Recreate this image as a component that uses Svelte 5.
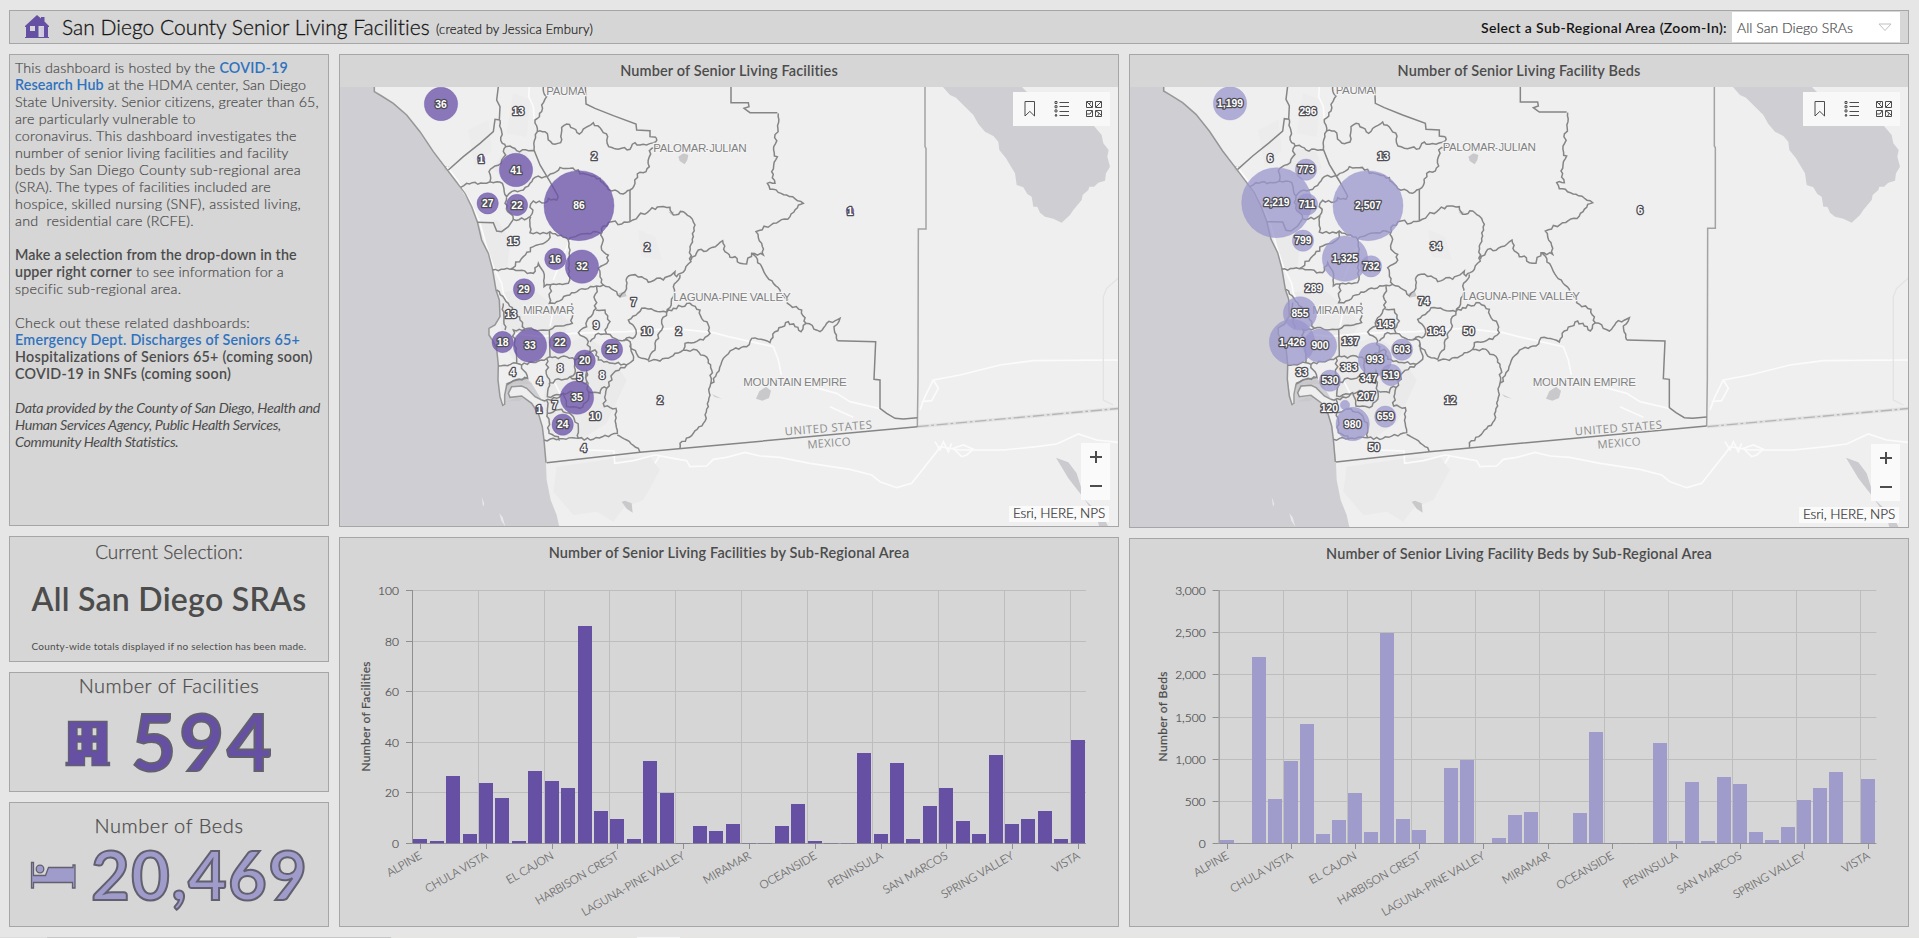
<script>
  // Spreads a line of text over a given width through its letter spacing.
  function track(node, width) {
    const n = [...node.textContent].length;
    const natural = node.getBoundingClientRect().width;
    node.style.letterSpacing = `${(width - natural) / n}px`;
  }

  const facilities = [2,1,27,4,24,18,1,29,25,22,86,13,10,2,33,20,0,7,5,8,0,0,7,16,1,0,0,36,4,32,2,15,22,9,4,35,8,10,13,2,41];
  const beds = [50,12,2219,537,985,1426,120,289,603,145,2507,296,170,13,900,995,0,74,347,383,0,0,370,1330,13,0,0,1199,34,735,33,799,711,145,50,207,525,665,855,12,773];
  const areas = ['ALPINE','CHULA VISTA','EL CAJON','HARBISON CREST','LAGUNA-PINE VALLEY','MIRAMAR','OCEANSIDE','PENINSULA','SAN MARCOS','SPRING VALLEY','VISTA'];

  // Map geometry is in thirds of a pixel.
  const straight = [
    '475,110 470,150 480,170 478,210',
    '1755,110 1755,290 1758,295 1758,537 1735,537 1734,990 1732,1130',
    '620,1238 900,1207 1140,1185 1732,1130',
    '948,262 930,260 930,242 890,240 888,222 820,197 765,175 738,162 736,110',
    '325,360 370,320 420,280 460,245 465,208 480,210',
    '870,420 870,515',
    '1312,188 1230,188 1212,175 1227,170 1225,158 1173,158 1173,110',
    '1492,872 1607,875 1602,988 1620,990 1620,1075 1640,1090 1665,1105 1690,1107 1732,1103',
    '628,840 630,920', '582,300 600,345 630,395 655,440', '412,517 460,518 470,543 485,545 505,530 520,508'
  ];
  const natural = [
    '480,210 485,245 487,280 497,290 490,305 497,315 485,330 483,340 465,348 447,365 450,395',
    '497,290 510,288 530,302 583,302',
    '610,110 620,140 605,165 605,185 585,210 592,245 582,300',
    '655,440 650,450 625,445 615,458 580,453 572,462 577,490 562,505 520,508',
    '592,245 615,245 632,275 645,283 662,278 665,232 680,222 700,235 718,252 738,232 760,218 785,240 803,260 806,290 845,295 870,298 885,278 900,285 948,275',
    '948,262 948,295 928,302 928,350 918,365 892,372 885,400 870,420 850,432 825,420 805,418 780,385 720,372 715,360 690,355 660,352 640,370 615,380 585,382 570,400 550,420 515,425 500,440 487,400 470,395 430,400 380,400 362,412',
    '500,440 495,460 510,490 520,508',
    '870,515 845,522 815,515 790,528 782,555 790,570 785,600 805,615 800,640 775,655 790,705 830,725 840,740 855,725 858,690',
    '870,515 895,498 930,480 960,470 990,472 1000,495 1030,485 1050,500 1065,525 1060,560 1050,590 1053,635 1035,660 1010,680 1005,665 970,690 950,685 925,697 905,680 875,675 858,690',
    '1053,630 1075,600 1100,603 1148,572 1155,605 1170,622 1185,620 1200,640 1220,642 1235,610 1270,615 1265,580 1248,545 1300,520 1350,500 1375,465 1390,460 1340,435 1290,418 1282,400 1305,400 1295,365 1312,320 1303,318 1315,190',
    '572,500 570,548 600,552 630,545 670,562 685,570 690,600 685,700 640,702 612,710 610,665 595,640 580,670 510,658 457,660',
    '510,658 550,620 580,590 625,570 630,545',
    '685,570 715,555 770,545 782,550',
    '632,705 628,760 650,755 695,728 735,718 770,708 790,705',
    '695,760 697,820 655,828 628,840 555,837 540,810 505,760 470,720',
    '770,708 765,750 768,775 745,805 740,830 715,848 745,875 748,910',
    '768,780 795,780 810,815 795,840 800,852 845,872 885,860 888,840 865,810 905,775 980,787 1000,740 1000,710 1015,690 1020,675',
    '980,787 965,820 965,840 945,880 945,900 925,930 905,925 870,890 870,875 850,870',
    '980,787 1000,775 1050,760 1080,780 1085,805 1105,825 1110,850 1090,870 1035,880 1030,900 1005,910 985,925 925,935',
    '1030,900 1070,900 1105,930 1115,960 1110,1010 1105,1070 1090,1120 1060,1150 1020,1180 1020,1195',
    '1110,1010 1130,970 1150,925 1180,898 1220,890 1235,865 1290,878 1305,845 1345,815 1365,830 1383,845 1398,820 1440,845 1460,820 1500,805 1482,830 1492,872',
    '1235,610 1265,650 1300,700 1320,720 1350,765 1385,780 1398,820',
    '475,948 530,940 545,945 620,925 680,920 705,930 748,910 765,900 775,930 860,945 880,930 870,875',
    '750,875 775,850 800,852',
    '530,940 520,840 555,837', '495,840 490,760',
    '620,925 622,980 630,998 690,980 705,970 705,930',
    '628,998 622,1040 660,1035 700,1025',
    '690,980 738,1002 740,965 745,1025 780,1030 785,1015 800,1015 793,1070 828,1075 832,1150 760,1168 715,1165 612,1170',
    '800,1015 820,970 860,945', '545,945 563,985 520,992 500,1002',
    '605,1050 650,1045 670,1030 680,1070 720,1075 745,1050 745,1025',
    '620,1090 665,1078 700,1100 715,1130 715,1165',
    '832,1155 860,1170 895,1195 900,1207', '620,1050 622,1090 627,1150 655,1160 658,1172'
  ];
  const coast = '103,110 103,125 125,138 160,160 200,195 240,245 280,305 316,352 345,390 375,430 395,470 412,515 425,570 445,610 457,655 463,690 468,720 478,750 480,800 465,825 447,835 447,855 460,875 470,895 475,945 474,990 480,1040 488,1066 494,1062 494,1035 500,1005 522,992 560,985';
  const strand = '560,985 575,1000 605,1050 585,1040 560,1015 545,1008 515,1010 505,1030 510,1042 545,1038 575,1060 595,1090 607,1130 612,1170 618,1238 620,1290 632,1350 650,1395 660,1440';
  const shore = strand.split(' ').slice(2, 15).join(' ');

  function rough(list) {
    const p = list.split(' ').map((s) => s.split(',').map(Number));
    let out = `M${p[0]}`;
    let seed = p[0][0] * 7 + p[0][1];
    for (let i = 1; i < p.length; i++) {
      const [ax, ay] = p[i - 1], [bx, by] = p[i];
      const len = Math.hypot(bx - ax, by - ay);
      const k = Math.max(1, Math.round(len / 9));
      for (let j = 1; j < k; j++) {
        seed = (seed * 9301 + 49297) % 233280;
        const d = (seed / 233280 - 0.5) * 9;
        const t = j / k;
        out += `L${(ax + (bx - ax) * t - ((by - ay) / len) * d).toFixed(1)} ${(ay + (by - ay) * t + ((bx - ax) / len) * d).toFixed(1)}`;
      }
      out += `L${bx} ${by}`;
    }
    return out;
  }
  const naturalPath = natural.map(rough).join('');

  const facilityMarks = [[303,162,50,'36'],[535,185,0,'13'],[423,327,12,'1'],[528,360,50,'41'],[762,320,0,'2'],[443,460,32,'27'],[531,465,32,'22'],[717,467,105,'86'],[520,574,0,'15'],[646,627,32,'16'],[726,650,50,'32'],[921,593,0,'2'],[552,718,32,'29'],[513,793,0,'13'],[881,756,0,'7'],[768,826,0,'9'],[921,845,0,'10'],[1016,845,0,'2'],[488,876,32,'18'],[570,887,50,'33'],[660,878,32,'22'],[816,899,32,'25'],[734,932,32,'20'],[518,968,0,'4'],[660,956,0,'8'],[719,982,0,'5'],[786,977,0,'8'],[599,993,0,'4'],[711,1043,50,'35'],[644,1067,0,'7'],[597,1078,12,'1'],[668,1124,32,'24'],[766,1100,0,'10'],[960,1051,0,'2'],[731,1194,0,'4'],[1530,483,12,'1']];
  const bedMarks = [[300,160,50,'1,199'],[534,185,0,'296'],[420,326,0,'6'],[528,359,32,'773'],[760,320,0,'13'],[440,458,105,'2,219'],[531,463,32,'711'],[714,467,105,'2,507'],[519,572,32,'799'],[645,626,68,'1,325'],[723,649,32,'732'],[918,590,0,'34'],[551,716,0,'289'],[510,790,50,'855'],[486,876,68,'1,426'],[570,887,50,'900'],[881,755,0,'74'],[767,824,0,'145'],[918,845,0,'164'],[1016,843,0,'50'],[661,875,0,'137'],[735,928,50,'993'],[816,899,32,'603'],[515,967,0,'33'],[600,992,32,'530'],[657,953,0,'383'],[716,984,0,'347'],[783,975,32,'519'],[710,1040,0,'207'],[598,1076,0,'120'],[645,1065,14,''],[668,1122,50,'980'],[766,1100,32,'659'],[961,1052,0,'12'],[732,1193,0,'50'],[1530,481,0,'6']];
  const places = [[677,122,116,'PAUMA'],[1080,294,280,'PALOMAR-JULIAN'],[626,781,154,'MIRAMAR'],[1176,741,352,'LAGUNA-PINE VALLEY'],[1365,997,310,'MOUNTAIN EMPIRE']];
</script>

{#snippet map(marks, color, alpha, height, dx)}
  <div class="map">
    <svg class="canvas" width="778" {height} viewBox="0 111 2334 {height * 3}">
      <rect width="2340" height="1440" fill="#cfced3" />
      <path d="M{coast} {strand} L2340 1440 L2340 100 L103 100Z" fill="#efefef" />
      <g fill="#e4e4e5">
        <path d="M412 520l60-10 40 60-10 80-45 8zM500 295l60 10 15 50-80 40-35-40zM480 730l90-20 60 50 60 60-60 100-100 20-45-60zM630 890l110-30 60 40 60 90-60 130-80 50-90-20-20-90z" opacity=".4" />
        <path d="M650 1250l180-25 100-5 30 40-50 90-60 25-30 40-50-30-70 10-60-70z" opacity=".4" />
        <path d="M520 130l50 20-10 110-60-10zM385 240l60-30 10 90-50 50zM895 540l50 20 20 70-60-10z" opacity=".25" />
      </g>
      <path d="M1808 110 1830 135 1848 143 1875 170 1900 195 1915 222 1935 245 1960 258 1975 275 1978 300 1998 325 2010 345 2025 370 2030 405 2050 412 2062 432 2075 440 2080 470 2092 470 2100 488 2115 500 2140 506 2165 518 2190 495 2200 480 2225 450 2228 435 2245 420 2248 410 2262 410 2275 398 2295 392 2298 370 2310 350 2302 320 2306 300 2290 280 2285 255 2262 228 2190 180 2060 125 2045 110Z" fill="#cfced3" />
      <path d="M2148 1223 2185 1237 2210 1270 2235 1350 2290 1400 2310 1440 2280 1440 2270 1400 2220 1330 2185 1285Z" fill="#cbcacf" />
      <g fill="#c9c9cc">
        <path d="M1015 320l15-10 15 5-3 15-8 13-15-10zM1248 1046l10-22 20-14 15 12-6 22-20 8zM845 1355l10-3 20 8 3 28-18-12zM1115 1032l30 14-20-5z" />
        <path d="M835 730l20-5 5 14-22 4zM985 485l18 0-8 10zM312 348l14 0 2 16-14 0z" />
        <path d="M497 1000l60-12 16 15-54 0-20 25zM500 1055l40-2 10-10-20 0z" />
      </g>
      <path d="M425 1340l8 22-4 8zM478 1390l10 12 8 28-12-18z" fill="#e9e9eb" />
      <g class="roads">
        <path d="M420 520 440 590 460 650 485 700 490 730 510 770" />
        <path d="M320 350 350 390 390 455 420 520" stroke-width="7" />
        <path d="M568 110 566 140 580 170 583 210M690 570 660 640 640 690" />
        <path d="M520 850 600 860 700 850 860 845 1000 835 1120 848 1165 860 1300 890 1315 930 1324 975" />
        <path d="M1470 1070 1540 1102M1415 1010 1490 1030 1530 1055 1620 1076M740 1200 822 1203 824 1240 880 1232 945 1215 1000 1225 1040 1232 1050 1250 1100 1248 1120 1228 1160 1222 1215 1207 1260 1218 1320 1222 1410 1240 1530 1258 1595 1275 1620 1295 1670 1313 1715 1300 1790 1205 1800 1190 1860 1200 1990 1200 2090 1190 2150 1182 2215 1152 2270 1170 2340 1178" />
        <path d="M1740 1080 1755 1040 1780 990 1860 975 1980 945 2080 932 2340 930M1745 1055 1775 1052 1795 1015 1780 990M1785 1175 1800 1200 1810 1175 1825 1205 1835 1180M1840 1195 1865 1220 1880 1215 1900 1198 1870 1185Z" />
        <path d="M630 830 640 780M640 990 660 1030M960 1215 945 1240" />
      </g>
      <path d="M2340 680 2300 715 2290 740 2290 1050 2320 1065" fill="none" stroke="#e3e3e3" stroke-width="4" />
      <path d="M1732 1130 2340 1075" stroke="#e2e2e2" stroke-width="10" />
      <path d="M1732 1130 2340 1075" stroke="#b5b5b5" stroke-width="4" stroke-dasharray="34 8 8 8" />
      <g class="bounds" transform="translate({dx} {dx})">
        <path d="M{coast}" opacity=".8" />
        <path d="M{shore}" opacity=".8" />
        {#each straight as s, i}<polyline points={s} opacity={i === 1 ? 0.72 : 1} />{/each}
        <path d={naturalPath} />
      </g>
      <g transform="translate({dx} {dx})">
        {#each places as [x, y, w, name]}
          <text class="place" {x} y={y + 12} textLength={w}>{name}</text>
        {/each}
      </g>
      <text class="country" x="1465" y="1146" textLength="262" transform="rotate(-4.5 1465 1135)">UNITED STATES</text>
      <text class="country" x="1467" y="1191" textLength="130" transform="rotate(-4.5 1467 1180)">MEXICO</text>
      {#each marks as [x, y, r]}
        {#if r}<circle cx={x} cy={y} {r} fill={color} fill-opacity={alpha} stroke={color} stroke-opacity=".35" stroke-width="3" />{/if}
      {/each}
      {#each marks as [x, y, , label]}<text class="count" {x} y={y + 11}>{label}</text>{/each}
    </svg>
    <div class="tools">
      <svg width="32" height="32" viewBox="0 0 32 32"><path d="M12 8.5h9.5v14.5l-4.7-4.6-4.8 4.6z" /></svg>
      <svg width="32" height="32" viewBox="0 0 32 32"><path d="M14.5 9.5H24M14.5 13.5H24M14.5 18.5H24M14.5 22.5H24" /><path d="M10 8.5h2v2h-2zM10 12.7h2v2h-2zM10 16.9h2v2h-2zM10 23l1-2 1 2z" /></svg>
      <svg width="32" height="32" viewBox="0 0 32 32"><path d="M9.5 8.5h6v6h-6zM18.5 8.5h6v6h-6zM9.5 17.5h6v6h-6zM18.5 17.5h6v6h-6z" /><path d="M10 9l5 5M12 11l2-1.500M19 14l2-2 3-3M10 21l3 0 2-3M19 18l3 2 0 1-2 3M22 20l2 2" /></svg>
    </div>
    <div class="zoomer"><span class="plus"></span><span class="minus"></span></div>
    <div class="credit"><span use:track={92}>Esri, HERE, NPS</span></div>
  </div>
{/snippet}

{#snippet chart(values, max, step, x0, x1, top, bottom, color, title, titleX, titleLen, width, height)}
  {@const pitch = (x1 - x0) / values.length}
  {@const scale = (bottom - top) / max}
  <svg class="chart" {width} {height}>
    {#each Array.from({ length: max / step + 1 }) as _, i}
      {@const y = Math.round(bottom - i * step * scale) + 0.5}
      <line x1={x0} x2={x1} y1={y} y2={y} class="grid" />
      <line x1={x0 - 6} x2={x0} y1={y} y2={y} class="axis" />
      <text x={x0 - 13} y={y + 4.5} class="tick">{(i * step).toLocaleString('en-US')}</text>
    {/each}
    {#each areas as name, i}
      {@const x = Math.round(x0 + i * 4 * pitch) + 0.5}
      {@const c = Math.round(x0 + (i * 4 + 0.5) * pitch) + 0.5}
      <line x1={x} x2={x} y1={top} y2={bottom} class="grid" />
      <line x1={c} x2={c} y1={bottom} y2={bottom + 6} class="axis" />
      <text class="cat" transform="translate({c + 2} {bottom + 15}) rotate(-30)">{name}</text>
    {/each}
    {#each values as v, i}
      {@const h = Math.max(1, Math.round(v * scale))}
      <rect x={Math.round(x0 + (i + 0.5) * pitch - 7)} y={bottom + 1 - h} width="14" height={h} fill={color} />
    {/each}
    <line x1={x0 + 0.5} x2={x0 + 0.5} y1={top} y2={bottom} class="axis" />
    <line x1={x0} x2={x1} y1={bottom + 0.5} y2={bottom + 0.5} class="axis" opacity=".8" />
    <text class="ytitle" textLength={titleLen} transform="translate({titleX} {(top + bottom) / 2}) rotate(-90)">{title}</text>
  </svg>
{/snippet}

<div class="page">
  <header class="panel">
    <svg class="home" width="26" height="24" viewBox="0 0 26 24"><path d="M13 0l4 3.500V2h3.500v4.500L25 11v1h-1v10h1v1H1v-1h1V12H1v-1z" fill="#6650a4" /><path d="M6 11h5v5H6zM14.500 11H20v11h-5.500z" fill="#d6d6d6" /><path d="M16.500 12h3.500v10l-3.500-1z" fill="#cfc9e6" /></svg>
    <h1><span use:track={368}>San Diego County Senior Living Facilities</span></h1>
    <small><span use:track={157}>(created by Jessica Embury)</span></small>
    <div class="choose">
      <label for="sra"><span use:track={246}>Select a Sub-Regional Area (Zoom-In):</span></label>
      <button id="sra"><span use:track={116}>All San Diego SRAs</span><svg width="14" height="9" viewBox="0 0 14 9"><path d="M1 1h12L7 7.500z" fill="none" stroke="#c0c0c0" /></svg></button>
    </div>
  </header>

  <main>
    <div class="col">
      <section class="panel about">
        <p><span use:track={273}>This dashboard is hosted by the <a href="#hub">COVID-19</a></span></p>
        <p><span use:track={291}><a href="#hub">Research Hub</a> at the HDMA center, San Diego</span></p>
        <p><span use:track={304}>State University. Senior citizens, greater than 65,</span></p>
        <p><span use:track={181}>are particularly vulnerable to</span></p>
        <p><span use:track={282}>coronavirus. This dashboard investigates the</span></p>
        <p><span use:track={274}>number of senior living facilities and facility</span></p>
        <p><span use:track={286}>beds by San Diego County sub-regional area</span></p>
        <p><span use:track={256}>(SRA). The types of facilities included are</span></p>
        <p><span use:track={286}>hospice, skilled nursing (SNF), assisted living,</span></p>
        <p><span use:track={179}>and&nbsp; residential care (RCFE).</span></p>
        <p class="gap"><b use:track={282}>Make a selection from the drop-down in the</b></p>
        <p><span use:track={269}><b>upper right corner</b> to see information for a</span></p>
        <p><span use:track={166}>specific sub-regional area.</span></p>
        <p class="gap"><span use:track={235}>Check out these related dashboards:</span></p>
        <p><a href="#ed" use:track={285}>Emergency Dept. Discharges of Seniors 65+</a></p>
        <p><b use:track={298}>Hospitalizations of Seniors 65+ (coming soon)</b></p>
        <p><b use:track={216}>COVID-19 in SNFs (coming soon)</b></p>
        <p class="gap"><i use:track={305}>Data provided by the County of San Diego, Health and</i></p>
        <p><i use:track={266}>Human Services Agency, Public Health Services,</i></p>
        <p><i use:track={163}>Community Health Statistics.</i></p>
      </section>
      <section class="panel current">
        <h3><span use:track={148}>Current Selection:</span></h3>
        <strong><span use:track={275}>All San Diego SRAs</span></strong>
        <em><span use:track={275}>County-wide totals displayed if no selection has been made.</span></em>
      </section>
      <section class="panel total fac">
        <h3><span use:track={181}>Number of Facilities</span></h3>
        <div class="figure">
          <svg width="318" height="80">
            <path d="M58.500 13.500h38.500v41h2.500v3h-17.500v-9h-7.500v9h-18.500v-3h2.500zM67 19.500v8.500h5v-8.500zM82 19.500v8.500h5v-8.500zM67 34v8.500h5V34zM82 34v8.500h5V34z" fill="#6650a4" fill-rule="evenodd" stroke="#62606f" stroke-width="1.300" />
            <text x="121" y="63" font-size="78" textLength="141" fill="#6650a4" class="big">594</text>
          </svg>
        </div>
      </section>
      <section class="panel total bed">
        <h3><span use:track={149}>Number of Beds</span></h3>
        <div class="figure">
          <svg width="318" height="80">
            <g fill="#9f9bcb" stroke="#62606f" stroke-width="1.300"><path d="M21.500 22.500h2v13h12l3-8h24.500v-2.500h2V48h-2.500v-5.500H23.500V48h-2z" /><circle cx="30" cy="29" r="3.800" /></g>
            <text x="81" y="60" font-size="67" textLength="216" fill="#9f9bcb" class="big">20,469</text>
          </svg>
        </div>
      </section>
    </div>

    <div class="col mid">
      <section class="panel">
        <h2><span use:track={218}>Number of Senior Living Facilities</span></h2>
        {@render map(facilityMarks, '#6a52a8', 0.77, 439, 0)}
      </section>
      <section class="panel plot">
        <h2><span use:track={361}>Number of Senior Living Facilities by Sub-Regional Area</span></h2>
        {@render chart(facilities, 100, 20, 72, 746, 20, 273, '#6650a4', 'Number of Facilities', 30, 110, 778, 356)}
      </section>
    </div>

    <div class="col right">
      <section class="panel">
        <h2><span use:track={243}>Number of Senior Living Facility Beds</span></h2>
        {@render map(bedMarks, '#9a95cc', 0.75, 440, -2)}
      </section>
      <section class="panel plot">
        <h2><span use:track={386}>Number of Senior Living Facility Beds by Sub-Regional Area</span></h2>
        {@render chart(beds, 3000, 500, 88.6, 746.4, 19, 272, '#9f9bcb', 'Number of Beds', 37, 90, 778, 355)}
      </section>
    </div>
  </main>
  <div class="strip"><i></i><i></i><i></i><i></i></div>
</div>

<style>
  :global(body) { margin: 0; background: #e6e6e6; overflow: hidden; }
  * { box-sizing: border-box; }
  .page { height: 938px; display: flex; flex-direction: column; background: #e6e6e6; font-family: Lato, "Open Sans", sans-serif; color: #4c4c4c; white-space: nowrap; }
  .page :global(span), b, i, .about a { display: inline-block; }
  .about span a, .about span b { display: inline; }
  .panel { background: #d6d6d6; border: 1px solid #a6a6a6; }
  header { height: 34px; margin: 10px 10px 10px 9px; display: flex; align-items: center; color: #151515; flex: none; }
  .home { margin-left: 14px; }
  h1 { font-size: 21px; font-weight: 300; margin: 0 0 1px 12px; width: 374px; line-height: 30px; -webkit-text-stroke: 0.3px #151515; }
  small { font-size: 13px; line-height: 24px; padding-top: 4px; font-weight: 300; -webkit-text-stroke: 0.2px #151515; }
  .choose { margin-left: auto; display: flex; align-items: center; gap: 5px; padding-right: 8px; }
  label { font-size: 14px; font-weight: 600; }
  button { width: 168px; height: 30px; background: #fff; border: 0; padding: 0 8px 0 5px; display: flex; align-items: center; justify-content: space-between; font: 300 14px Lato, sans-serif; color: #4c4c4c; -webkit-text-stroke: 0.2px #4c4c4c; }
  main { display: grid; grid-template-columns: 320px 780px 780px; column-gap: 10px; padding-left: 9px; height: 873px; flex: none; }
  .col { display: grid; row-gap: 10px; grid-template-rows: 472px 126px 120px 125px; }
  .mid { grid-template-rows: 473px 390px; }
  .right { grid-template-rows: 474px 389px; }
  .about { padding: 4px 0 0 5px; font-size: 14.300px; font-weight: 300; line-height: 17px; }
  .about span { -webkit-text-stroke: 0.2px #4c4c4c; }
  .about span a, .about span b { -webkit-text-stroke: 0; }
  p { margin: 0; height: 17px; }
  .gap { margin-top: 17px; }
  b { font-weight: 600; }
  i { font-weight: 400; }
  a { color: #2f72be; font-weight: 600; text-decoration: none; }
  h2 { margin: 0; height: 32px; line-height: 31px; font-size: 14.500px; font-weight: 600; text-align: center; }
  .plot h2 { line-height: 30px; }
  h3 { margin: 0; font-weight: 300; font-size: 20px; line-height: 24px; text-align: center; -webkit-text-stroke: 0.25px #4c4c4c; }
  .current { display: flex; flex-direction: column; align-items: center; }
  .current h3 { margin-top: 3px; font-size: 19px; }
  strong { font-size: 32px; line-height: 40px; margin-top: 15px; font-weight: 600; }
  em { font-style: normal; font-size: 10px; line-height: 14px; margin-top: 20px; }
  .fac h3 { margin-top: 0; }
  .bed h3 { margin-top: 10px; }
  .figure { height: 80px; margin-top: 11px; }
  .bed .figure { margin-top: 3px; }
  .big { font-weight: 700; stroke: #62606f; stroke-width: 2px; }
  .map { position: relative; overflow: hidden; }
  svg { display: block; }
  .figure svg { overflow: visible; }
  .bounds { fill: none; stroke: #858585; stroke-width: 4.500; }
  .roads { fill: none; stroke: #fbfbfb; stroke-width: 5; }
  .place { font: 35px "Liberation Sans", Arial, sans-serif; fill: #828282; stroke: #f4f4f4; stroke-width: 7px; paint-order: stroke; text-anchor: middle; }
  .country { font: 34px "Open Sans", sans-serif; fill: #8d8d8d; stroke: #efefef; stroke-width: 6px; paint-order: stroke; text-anchor: middle; }
  .count { font: bold 31px "Liberation Sans", Arial, sans-serif; fill: #fff; stroke: #4e4d54; stroke-width: 8px; stroke-linejoin: round; paint-order: stroke; text-anchor: middle; }
  .tools { position: absolute; right: 8px; top: 5px; width: 97px; height: 34px; background: #f8f8f8; display: flex; align-items: center; }
  .tools svg { fill: none; stroke: #4c4c4c; stroke-width: 1; }
  .zoomer { position: absolute; right: 8px; bottom: 26px; width: 29px; height: 57px; background: #fafafa; display: flex; flex-direction: column; align-items: center; justify-content: space-around; }
  .zoomer span { width: 12px; height: 12px; background: linear-gradient(#4c4c4c, #4c4c4c) center / 12px 2px no-repeat; }
  .zoomer .plus { background: linear-gradient(#4c4c4c, #4c4c4c) center / 12px 2px no-repeat, linear-gradient(#4c4c4c, #4c4c4c) center / 2px 12px no-repeat; }
  .credit { position: absolute; right: 9px; bottom: 4px; height: 16px; padding: 0 4px; line-height: 15px; font-size: 13.500px; font-weight: 300; -webkit-text-stroke: 0.2px #323232; background: #fafafa; color: #323232; }
  .grid { stroke: #bdbdbd; stroke-width: 1; }
  .axis { stroke: #8f8f8f; stroke-width: 1; }
  .tick { font-size: 12px; font-weight: 300; fill: #4c4c4c; text-anchor: end; stroke: #4c4c4c; stroke-width: 0.2px; }
  .cat { font-size: 11.400px; font-weight: 300; fill: #6a6a6a; stroke: #6a6a6a; stroke-width: 0.2px; text-anchor: end; }
  .ytitle { font-size: 12px; font-weight: 400; fill: #4c4c4c; text-anchor: middle; stroke: #4c4c4c; stroke-width: 0.2px; }
  .strip { margin-top: auto; height: 1px; display: grid; grid-template-columns: 47px 344px 246px 1fr; background: #e6e5e0; }
  .strip i:nth-child(1) { background: #dcdcdc; }
  .strip i:nth-child(2) { background: #c6c6c6; }
  .strip i:nth-child(4) { background: #f6f6f6; width: 43px; }
</style>
